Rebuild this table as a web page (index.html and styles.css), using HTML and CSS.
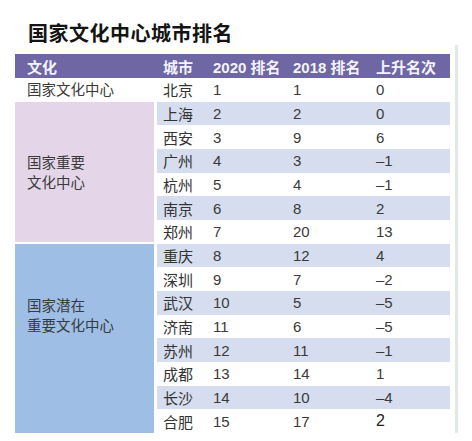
FILE: index.html
```html
<!DOCTYPE html>
<html lang="zh-CN">
<head>
    <meta charset="UTF-8">
    <meta name="viewport" content="width=device-width, initial-scale=1.0">
    <title>国家文化中心城市排名</title>
    <link rel="stylesheet" href="styles.css">
</head>
<body>
    <h1 class="title">国家文化中心城市排名</h1>
    <div class="frame">
        <div class="rank-table">
            <div class="head">
                <div>文化</div>
                <div>城市</div>
                <div>2020 排名</div>
                <div>2018 排名</div>
                <div>上升名次</div>
            </div>

            <div class="group g-top">国家文化中心</div>
            <div class="row"><div>北京</div><div>1</div><div>1</div><div>0</div></div>

            <div class="group g-pink">国家重要<br>文化中心</div>
            <div class="row stripe"><div>上海</div><div>2</div><div>2</div><div>0</div></div>
            <div class="row"><div>西安</div><div>3</div><div>9</div><div>6</div></div>
            <div class="row stripe"><div>广州</div><div>4</div><div>3</div><div>–1</div></div>
            <div class="row"><div>杭州</div><div>5</div><div>4</div><div>–1</div></div>
            <div class="row stripe"><div>南京</div><div>6</div><div>8</div><div>2</div></div>
            <div class="row"><div>郑州</div><div>7</div><div>20</div><div>13</div></div>

            <div class="group g-blue">国家潜在<br>重要文化中心</div>
            <div class="row stripe"><div>重庆</div><div>8</div><div>12</div><div>4</div></div>
            <div class="row"><div>深圳</div><div>9</div><div>7</div><div>–2</div></div>
            <div class="row stripe"><div>武汉</div><div>10</div><div>5</div><div>–5</div></div>
            <div class="row"><div>济南</div><div>11</div><div>6</div><div>–5</div></div>
            <div class="row stripe"><div>苏州</div><div>12</div><div>11</div><div>–1</div></div>
            <div class="row"><div>成都</div><div>13</div><div>14</div><div>1</div></div>
            <div class="row stripe"><div>长沙</div><div>14</div><div>10</div><div>–4</div></div>
            <div class="row"><div>合肥</div><div>15</div><div>17</div><div class="big">2</div></div>
        </div>
    </div>
</body>
</html>
```

FILE: styles.css
```css
body {
    margin: 0;
    padding-top: 20px;
    background: #fff;
    font-family: "Liberation Sans", "Noto Sans CJK SC", sans-serif;
    color: #3a3a3a;
}
.title {
    margin: 0 0 0 28px;
    font-family: "Noto Sans CJK SC", sans-serif;
    font-size: 20px;
    font-weight: 700;
    line-height: 25px;
    letter-spacing: 0.5px;
    color: #141414;
}
.frame {
    width: 435px;
    margin-left: 15px;
    padding: 9px 5px 0 0;
    border-right: 3px solid #e2e9e3;
}
.rank-table {
    display: grid;
    grid-template-columns: 142px 50px 80px 83px 80px;
    grid-template-rows: 24px repeat(15, 23.67px);
    font-size: 15px;
}
.head {
    grid-column: 1 / -1;
    display: grid;
    grid-template-columns: 142px 50px 80px 83px 80px;
    align-items: center;
    background: #6e67a3;
    color: #f4f2fb;
    font-weight: 600;
}
.head div {
    padding-left: 6px;
}
.head div:first-child {
    padding-left: 12px;
}
.row {
    grid-column: 2 / -1;
    display: grid;
    grid-template-columns: 50px 80px 83px 80px;
    align-items: center;
}
.row div {
    padding-left: 6px;
}
.row div:first-child {
    color: #333;
}
.stripe {
    background: #d6ddee;
}
.group {
    grid-column: 1;
    margin-right: 3px;
    padding-left: 12px;
    font-size: 14.5px;
    line-height: 20px;
    color: #3a3a3a;
}
.g-top {
    display: flex;
    align-items: center;
}
.g-pink {
    grid-row: span 6;
    margin-bottom: 2px;
    padding-top: 51px;
    background: #e4d6e8;
}
.g-blue {
    grid-row: span 8;
    padding-top: 52px;
    background: #9ebee6;
}
.big {
    font-size: 16px;
    color: #222;
}
```
